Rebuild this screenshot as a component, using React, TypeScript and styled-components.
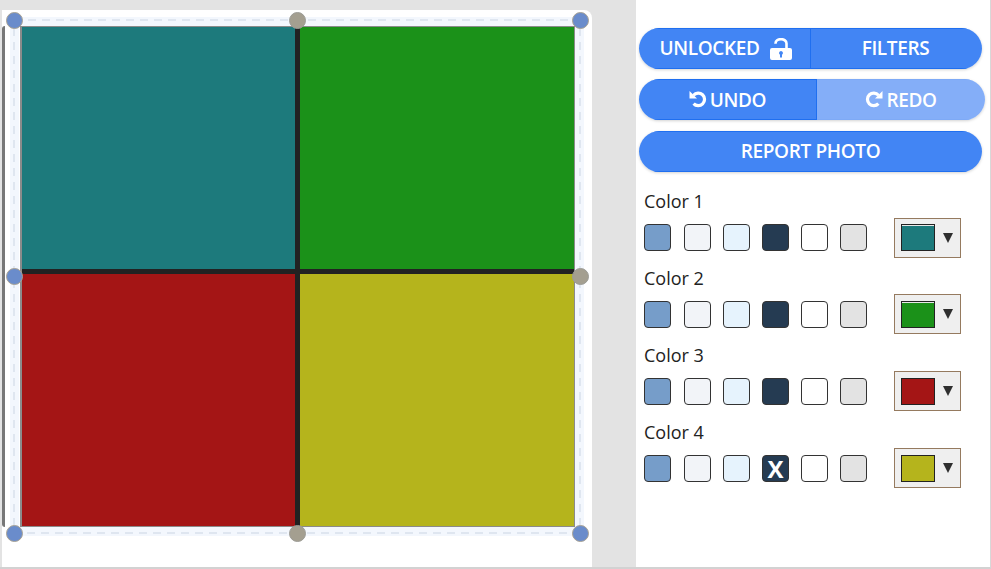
import styled, { createGlobalStyle } from "styled-components"

const GlobalStyle = createGlobalStyle`
  html, body {
    margin: 0;
    padding: 0;
    background: #e3e3e3;
  }
  * {
    box-sizing: border-box;
  }
`

const Page = styled.div`
  width: 991px;
  height: 569px;
  display: flex;
  overflow: hidden;
  background: #e3e3e3;
  font-family: "Open Sans", "Noto Sans", sans-serif;
  border-bottom: 2px solid #d2d2d2;
  border-right: 1px solid #d8d8d8;
`

const EditorColumn = styled.div`
  width: 592px;
  padding: 10px 0 0 2px;
`

const EditorCard = styled.div`
  position: relative;
  width: 590px;
  height: 557px;
  background: #fff;
  border-top-right-radius: 8px;
  padding: 16px 16px 0 18px;
`

const Photo = styled.div`
  width: 556px;
  height: 502px;
  display: grid;
  grid-template-columns: 273px 274px;
  grid-template-rows: 242px 252px;
  gap: 5px;
  background: #222222;
  border-right: 2px solid #8b8b8b;
  border-bottom: 2px solid #8b8b8b;
  border-left: 2px solid #8b8b8b;
  border-top: 1px solid #8b8b8b;
`

const Quad = styled.div<{ $color: string }>`
  background: ${(p) => p.$color};
`

const FrameLines = styled.svg`
  position: absolute;
  left: 0;
  top: 0;
  width: 590px;
  height: 557px;
  pointer-events: none;
`

const Handle = styled.div<{ $x: number; $y: number; $grey?: boolean }>`
  position: absolute;
  left: ${(p) => p.$x - 8.5}px;
  top: ${(p) => p.$y - 8.5}px;
  width: 17px;
  height: 17px;
  border-radius: 50%;
  background: ${(p) => (p.$grey ? "#a49f90" : "#6a8ccb")};
  border: 1.5px solid ${(p) => (p.$grey ? "#9c9c96" : "#a8a294")};
`

const LeftEdge = styled.div`
  position: absolute;
  left: 0;
  top: 16px;
  width: 3px;
  height: 501px;
  background: #777777;
  border-radius: 3px 0 0 3px;
`

const Sidebar = styled.div`
  margin-left: 44px;
  width: 354px;
  background: #fff;
  padding: 28px 0 0 3px;
`

const ButtonRow = styled.div<{ $width: number; $gap: number }>`
  display: flex;
  width: ${(p) => p.$width}px;
  height: 41px;
  margin-bottom: ${(p) => p.$gap}px;
  border-radius: 21px;
  overflow: hidden;
  box-shadow: 0 1px 3px rgba(0, 0, 0, 0.18);
`

const PillButton = styled.button<{ $width?: number; $faded?: boolean; $divider?: boolean; $nudge?: number; $low?: boolean }>`
  ${(p) => (p.$width ? `width: ${p.$width}px;` : "flex: 1;")}
  display: flex;
  align-items: center;
  justify-content: center;
  gap: 3px;
  padding: 0 ${(p) => (p.$nudge && p.$nudge < 0 ? -p.$nudge : 0)}px ${(p) => (p.$low ? 0 : 2)}px ${(p) => (p.$nudge && p.$nudge > 0 ? p.$nudge : 0)}px;
  border: none;
  border-top: 1px solid ${(p) => (p.$faded ? "#7eaaf6" : "#1f6ff0")};
  border-bottom: 1px solid ${(p) => (p.$faded ? "#7eaaf6" : "#1f6ff0")};
  border-right: ${(p) => (p.$divider ? "1px solid #1f6ff0" : "none")};
  background: ${(p) => (p.$faded ? "#84aef8" : "#4285f4")};
  color: #fff;
  font-family: inherit;
  font-size: 19px;
  font-weight: 600;
  letter-spacing: -0.35px;
  svg {
    display: block;
  }
`

const LockSvg = styled.svg`
  margin: 2px 0 0 7px;
  width: 22px;
  height: 22px;
`

const TurnSvg = styled.svg<{ $flip?: boolean }>`
  width: 18px;
  height: 18px;
  margin-bottom: 2px;
  ${(p) => (p.$flip ? "transform: scaleX(-1);" : "")}
`

const ColorList = styled.div`
  padding-top: 9px;
`

const ColorBlock = styled.div`
  display: flow-root;
  padding: 0 0 0 5px;
  height: 76.9px;
`

const ColorTitle = styled.div`
  font-size: 18px;
  line-height: 24px;
  color: #222;
  margin-top: -2px;
`

const ColorRow = styled.div`
  display: flex;
  align-items: flex-start;
  margin-top: 11px;
  height: 40px;
`

const Swatches = styled.div`
  display: grid;
  grid-template-columns: 28px repeat(5, 27px);
  column-gap: 12px;
`

const Swatch = styled.div<{ $color: string }>`
  width: 27px;
  height: 27px;
  display: flex;
  align-items: center;
  justify-content: center;
  background: ${(p) => p.$color};
  border: 1px solid #333;
  border-radius: 4px;
  color: #fff;
  font-size: 24px;
  font-weight: 700;
`

const ColorSelect = styled.div`
  width: 67px;
  height: 40px;
  margin: -6.5px 0 0 27px;
  display: flex;
  align-items: center;
  padding-left: 6px;
  background: #efefef;
  border: 1px solid #957a5f;
`

const SelectChip = styled.div<{ $color: string; $line?: boolean }>`
  width: 34px;
  height: 27px;
  background: ${(p) => p.$color};
  border: 1px solid #222;
  ${(p) => (p.$line ? "box-shadow: inset 0 1px 0 #e8e8e8;" : "")}
`

const SelectArrow = styled.span`
  width: 0;
  height: 0;
  margin-left: 8px;
  border-left: 5px solid transparent;
  border-right: 5px solid transparent;
  border-top: 10px solid #2f2f2f;
`

const LockIcon = () => (
  <LockSvg viewBox="0 0 22 22">
    <path d="M5.5 5.8 V5.5 a5.5 4.4 0 0 1 11 0 V12" fill="none" stroke="#fff" strokeWidth="2.6" />
    <path
      fillRule="evenodd"
      fill="#fff"
      d="M2 10 H20 a2 2 0 0 1 2 2 V20 a2 2 0 0 1 -2 2 H2 a2 2 0 0 1 -2 -2 V12 a2 2 0 0 1 2 -2 Z M11 13 a2 2 0 0 0 -1 3.7 V19.5 H12 V16.7 A2 2 0 0 0 11 13 Z"
    />
  </LockSvg>
)

// mirrored for redo
const TurnIcon = ({ flip }: { flip?: boolean }) => (
  <TurnSvg viewBox="0 0 18 18" $flip={flip}>
    <path d="M4.5 5.2 A6.3 6.3 0 1 1 4.6 13.6" fill="none" stroke="#fff" strokeWidth="3.2" />
    <path d="M0.5 1 V8.6 H8 Z" fill="#fff" />
  </TurnSvg>
)

const swatchColors = ["#769dc9", "#f2f4f8", "#e6f3fd", "#253b52", "#ffffff", "#e3e3e3"]

const colors = [
  { name: "Color 1", fill: "#1d7a7c", picked: -1, line: true },
  { name: "Color 2", fill: "#1b9119", picked: -1, line: true },
  { name: "Color 3", fill: "#a41515", picked: -1, line: false },
  { name: "Color 4", fill: "#b5b41c", picked: 3, line: false },
]

const handles = [
  { x: 12, y: 10 },
  { x: 295, y: 10, grey: true },
  { x: 578, y: 10 },
  { x: 12, y: 266 },
  { x: 578, y: 266, grey: true },
  { x: 12, y: 523 },
  { x: 295, y: 523, grey: true },
  { x: 578, y: 523 },
]

export default function App() {
  return (
    <Page>
      <GlobalStyle />
      <EditorColumn>
        <EditorCard>
          <LeftEdge />
          <FrameLines viewBox="0 0 590 557">
            <rect x="12.5" y="11.5" width="565" height="510" fill="none" stroke="#f3f7fd" strokeWidth="9" />
            <rect x="12" y="10" width="566" height="513" fill="none" stroke="#d9e1eb" strokeWidth="1.5" strokeDasharray="8 6" />
          </FrameLines>
          <Photo>
            {colors.map((c) => (
              <Quad key={c.name} $color={c.fill} />
            ))}
          </Photo>
          {handles.map((h) => (
            <Handle key={`${h.x}-${h.y}`} $x={h.x} $y={h.y} $grey={h.grey} />
          ))}
        </EditorCard>
      </EditorColumn>

      <Sidebar>
        <ButtonRow $width={343} $gap={10}>
          <PillButton $width={172} $divider $nudge={2}>
            UNLOCKED
            <LockIcon />
          </PillButton>
          <PillButton $nudge={-2}>FILTERS</PillButton>
        </ButtonRow>
        <ButtonRow $width={346} $gap={11}>
          <PillButton $width={178} $divider $low>
            <TurnIcon />
            UNDO
          </PillButton>
          <PillButton $faded $low>
            <TurnIcon flip />
            REDO
          </PillButton>
        </ButtonRow>
        <ButtonRow $width={343} $gap={10}>
          <PillButton>REPORT PHOTO</PillButton>
        </ButtonRow>

        <ColorList>
          {colors.map((c) => (
            <ColorBlock key={c.name}>
              <ColorTitle>{c.name}</ColorTitle>
              <ColorRow>
                <Swatches>
                  {swatchColors.map((s, i) => (
                    <Swatch key={s} $color={s}>
                      {c.picked === i ? "X" : ""}
                    </Swatch>
                  ))}
                </Swatches>
                <ColorSelect>
                  <SelectChip $color={c.fill} $line={c.line} />
                  <SelectArrow />
                </ColorSelect>
              </ColorRow>
            </ColorBlock>
          ))}
        </ColorList>
      </Sidebar>
    </Page>
  )
}
